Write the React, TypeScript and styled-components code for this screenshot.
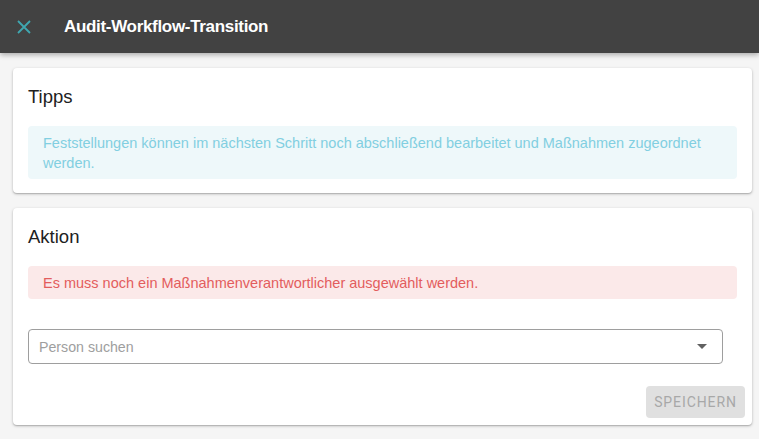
import React from "react";
import styled, { createGlobalStyle } from "styled-components";

const Global = createGlobalStyle`
  html, body { margin: 0; padding: 0; background: #f5f5f5; }
  body { font-family: "Liberation Sans", Arial, sans-serif; }
`;

const Page = styled.div`
  width: 759px;
  height: 439px;
  overflow: hidden;
  background: #f5f5f5;
`;

const Header = styled.header`
  height: 53px;
  background: #424242;
  display: flex;
  align-items: center;
  padding-left: 16px;
  box-shadow: 0 2px 5px rgba(0, 0, 0, 0.3);
  position: relative;
  z-index: 1;
`;

const CloseButton = styled.button`
  width: 16px;
  height: 16px;
  padding: 0;
  border: none;
  background: none;
  display: flex;
  align-items: center;
  justify-content: center;
  margin-right: 32px;
`;

const Title = styled.h1`
  margin: 0;
  color: #ffffff;
  font-size: 17px;
  font-weight: 700;
  letter-spacing: -0.32px;
`;

const Content = styled.main`
  display: flex;
  flex-direction: column;
  gap: 15px;
  padding: 15px 7px 0 13px;
`;

const Card = styled.section`
  background: #fff;
  border-radius: 4px;
  box-shadow: 0 1px 3px rgba(0, 0, 0, 0.25), 0 1px 1px rgba(0, 0, 0, 0.12);
  padding: 15px 15px 14px 15px;
  display: flex;
  flex-direction: column;
`;

const CardTitle = styled.h2`
  margin: 0 0 15px 0;
  font-size: 18.5px;
  font-weight: 400;
  line-height: 28px;
  color: #212121;
`;

const Alert = styled.div<{ $tone: "info" | "error" }>`
  border-radius: 4px;
  padding: 7px 15px 6px 15px;
  font-size: 14.5px;
  line-height: 20px;
  background: ${(p) => (p.$tone === "info" ? "#eef8fa" : "#fbe9e9")};
  color: ${(p) => (p.$tone === "info" ? "#82cfe1" : "#e35d5d")};
`;

const SelectBox = styled.div`
  margin: 30px 14px 0 0;
  height: 35px;
  box-sizing: border-box;
  border: 1px solid #9e9e9e;
  border-radius: 4px;
  display: flex;
  align-items: center;
  padding: 0 15px 0 10px;
`;

const Placeholder = styled.span`
  flex: 1;
  color: #9e9e9e;
  font-size: 14.2px;
`;

const Caret = styled.span`
  width: 0;
  height: 0;
  border-left: 5px solid transparent;
  border-right: 5px solid transparent;
  border-top: 5px solid #616161;
`;

const Actions = styled.div`
  display: flex;
  justify-content: flex-end;
  margin: 22px -8px -7px 0;
`;

const SaveButton = styled.button`
  height: 32px;
  padding: 0 8px;
  border: none;
  border-radius: 4px;
  background: #e0e0e0;
  color: #a8a8a8;
  font-family: Roboto, "Liberation Sans", sans-serif;
  font-size: 14px;
  letter-spacing: 0.9px;
  text-transform: uppercase;
  width: 99px;
`;

export default function App() {
  return (
    <Page>
      <Global />
      <Header>
        <CloseButton aria-label="close">
          <svg width="14" height="14" viewBox="0 0 14 14">
            <path d="M1 1 L13 13 M13 1 L1 13" stroke="#3fa7b0" strokeWidth="1.8" />
          </svg>
        </CloseButton>
        <Title>Audit-Workflow-Transition</Title>
      </Header>
      <Content>
        <Card>
          <CardTitle>Tipps</CardTitle>
          <Alert $tone="info">
            Feststellungen können im nächsten Schritt noch abschließend bearbeitet und Maßnahmen zugeordnet werden.
          </Alert>
        </Card>
        <Card>
          <CardTitle>Aktion</CardTitle>
          <Alert $tone="error">Es muss noch ein Maßnahmenverantwortlicher ausgewählt werden.</Alert>
          <SelectBox>
            <Placeholder>Person suchen</Placeholder>
            <Caret />
          </SelectBox>
          <Actions>
            <SaveButton disabled>Speichern</SaveButton>
          </Actions>
        </Card>
      </Content>
    </Page>
  );
}
